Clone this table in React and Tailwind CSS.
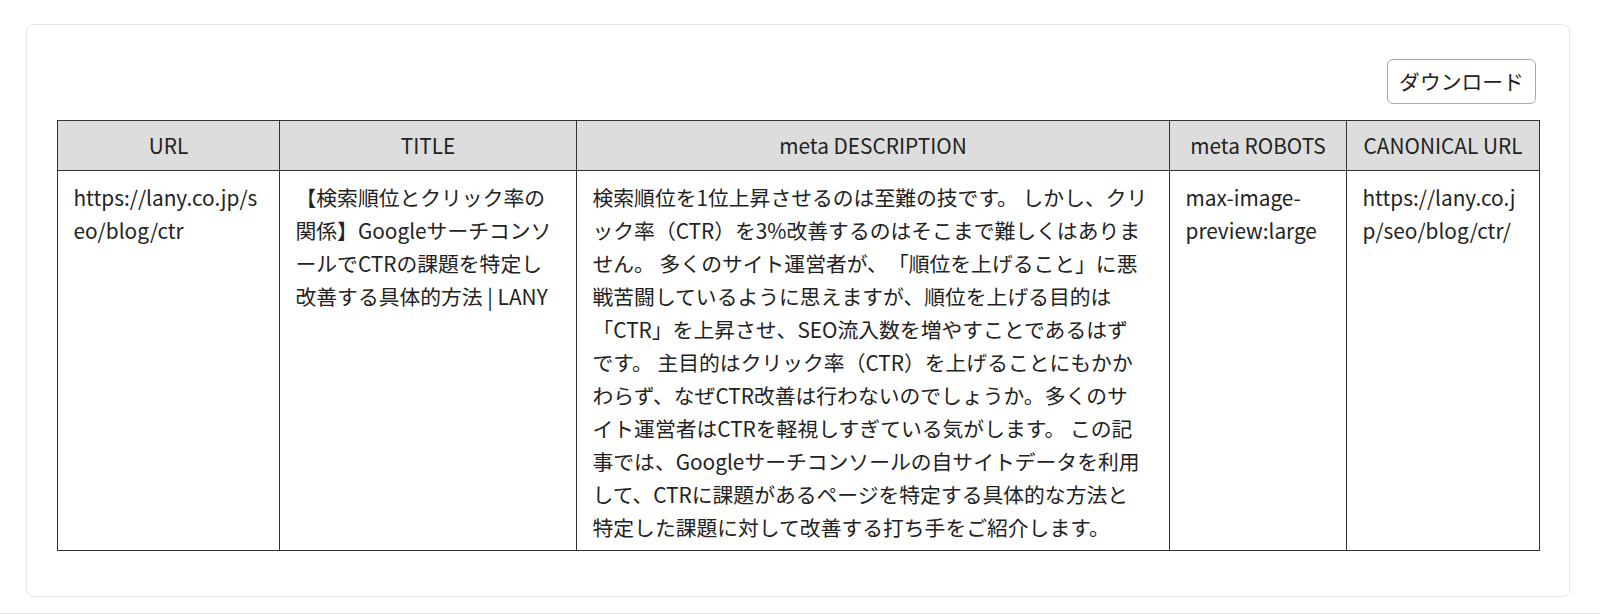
import React from 'react'

// description is kept line by line so the wrap matches the original page
const descLines = [
  '検索順位を1位上昇させるのは至難の技です。 しかし、クリ',
  'ック率（CTR）を3%改善するのはそこまで難しくはありま',
  'せん。 多くのサイト運営者が、「順位を上げること」に悪',
  '戦苦闘しているように思えますが、順位を上げる目的は',
  '「CTR」を上昇させ、SEO流入数を増やすことであるはず',
  'です。 主目的はクリック率（CTR）を上げることにもかか',
  'わらず、なぜCTR改善は行わないのでしょうか。多くのサ',
  'イト運営者はCTRを軽視しすぎている気がします。 この記',
  '事では、Googleサーチコンソールの自サイトデータを利用',
  'して、CTRに課題があるページを特定する具体的な方法と',
  '特定した課題に対して改善する打ち手をご紹介します。',
]

const rows = [
  {
    url: 'https://lany.co.jp/seo/blog/ctr',
    title: '【検索順位とクリック率の関係】GoogleサーチコンソールでCTRの課題を特定し改善する具体的方法 | LANY',
    desc: descLines,
    robots: 'max-image-preview:large',
    canonical: 'https://lany.co.jp/seo/blog/ctr/',
  },
]

const App = () => {
  return (
    <div className="h-[614px] border-b border-[#dedede] bg-white pl-[26px] pr-[30px] pt-[24px] font-['Noto_Sans_CJK_JP',sans-serif] text-[20.8px] leading-[33px] text-[#222] [text-spacing-trim:space-all]">
      <div className="rounded-lg border border-[#e6e6e6] bg-white px-[30px] pt-[34px] pb-[45px]">
        <div className="mb-4 flex justify-end pr-[3px]">
          <button className="h-[45px] w-[149px] rounded-md border border-[#a8a8a8] bg-white text-[20.8px] leading-[33px] text-[#222]">
            ダウンロード
          </button>
        </div>

        <table className="w-full table-fixed border-collapse">
          <colgroup>
            <col className="w-[222px]" />
            <col className="w-[297px]" />
            <col className="w-[593px]" />
            <col className="w-[177px]" />
            <col className="w-[193px]" />
          </colgroup>
          <thead>
            <tr className="bg-[#dddddd]">
              <th className="border border-[#333] px-[15.5px] py-2 text-center font-normal">URL</th>
              <th className="border border-[#333] px-[15.5px] py-2 text-center font-normal">TITLE</th>
              <th className="border border-[#333] px-[15.5px] py-2 text-center font-normal">meta DESCRIPTION</th>
              <th className="border border-[#333] px-[15.5px] py-2 text-center font-normal">meta ROBOTS</th>
              <th className="border border-[#333] px-[15.5px] py-2 text-center font-normal">CANONICAL URL</th>
            </tr>
          </thead>
          <tbody>
            {rows.map((val) => (
              <tr key={val.url}>
                <td className="break-words border border-[#333] px-[15.5px] pt-[10px] pb-[6px] align-top">{val.url}</td>
                <td className="break-words border border-[#333] px-[15.5px] pt-[10px] pb-[6px] align-top">{val.title}</td>
                <td className="break-words border border-[#333] pl-[15.5px] pr-[12px] pt-[10px] pb-[6px] align-top">
                  {val.desc.map((line, i) => (
                    <React.Fragment key={i}>
                      {line}
                      {i < val.desc.length - 1 && <br />}
                    </React.Fragment>
                  ))}
                </td>
                <td className="break-words border border-[#333] px-[15.5px] pt-[10px] pb-[6px] align-top">{val.robots}</td>
                <td className="break-words border border-[#333] px-[15.5px] pt-[10px] pb-[6px] align-top">{val.canonical}</td>
              </tr>
            ))}
          </tbody>
        </table>
      </div>
    </div>
  )
}

export default App
